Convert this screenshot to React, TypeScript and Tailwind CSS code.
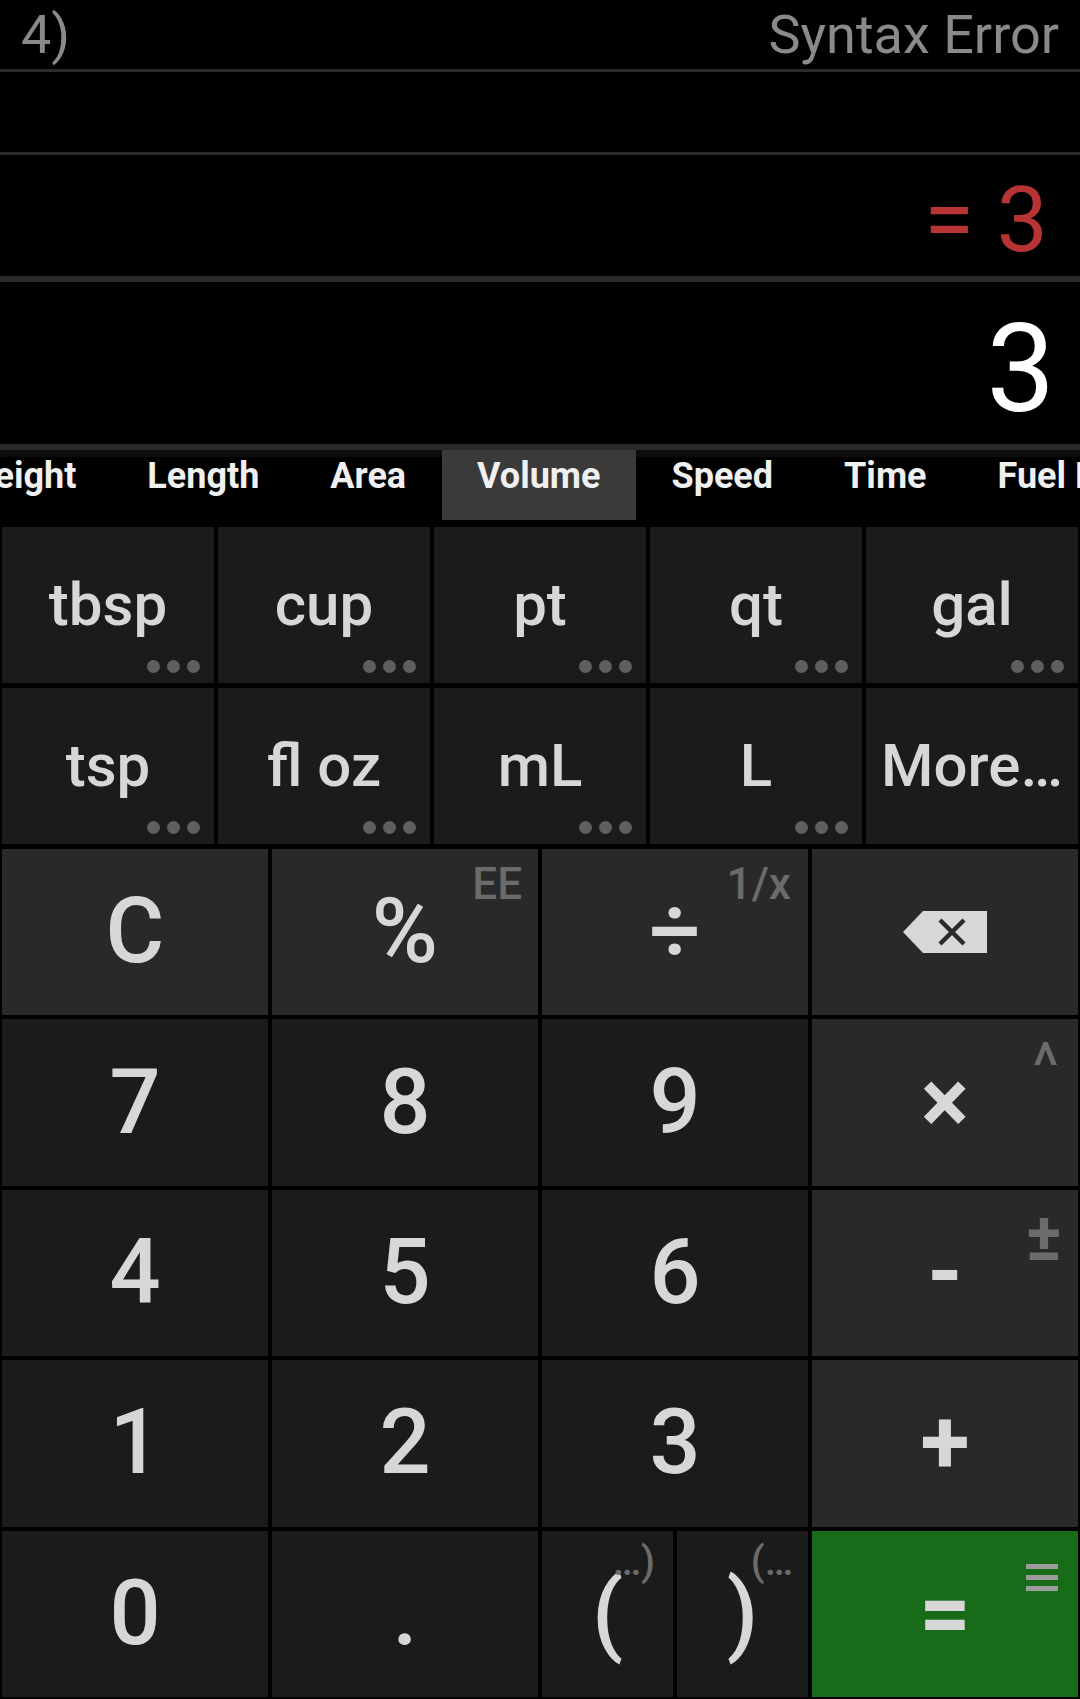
import { ReactNode } from 'react';

const tabs = ['Weight', 'Length', 'Area', 'Volume', 'Speed', 'Time', 'Fuel Economy'];

const units = [
  { label: 'tbsp', dots: true },
  { label: 'cup', dots: true },
  { label: 'pt', dots: true },
  { label: 'qt', dots: true },
  { label: 'gal', dots: true },
  { label: 'tsp', dots: true },
  { label: 'fl oz', dots: true },
  { label: 'mL', dots: true },
  { label: 'L', dots: true },
  { label: 'More…', dots: false },
];

const Dots = () => (
  <div className="absolute right-[14px] bottom-[10px] flex gap-[7px]">
    <span className="w-[13px] h-[13px] rounded-full bg-[#5f5f5f]" />
    <span className="w-[13px] h-[13px] rounded-full bg-[#5f5f5f]" />
    <span className="w-[13px] h-[13px] rounded-full bg-[#5f5f5f]" />
  </div>
);

type KeyProps = {
  children: ReactNode;
  sub?: ReactNode;
  subClass?: string;
  tone?: 'num' | 'op' | 'eq';
  className?: string;
};

const Key = ({ children, sub, subClass = '', tone = 'num', className = '' }: KeyProps) => {
  const bg = tone === 'op' ? 'bg-[#292929]' : tone === 'eq' ? 'bg-[#186b18]' : 'bg-[#1b1b1b]';
  return (
    <div className={`relative flex items-center justify-center text-[90px] leading-none text-[#d7d7d7] ${bg} ${className}`}>
      {children}
      {sub && <div className={`absolute leading-none text-[#6b6b6b] ${subClass}`}>{sub}</div>}
    </div>
  );
};

const Backspace = () => (
  <svg width="84" height="42" viewBox="0 0 84 42">
    <path d="M0 21 L20 0 H84 V42 H20 Z" fill="#d7d7d7" />
    <path d="M37 9 L61 33 M61 9 L37 33" stroke="#292929" strokeWidth="4.5" />
  </svg>
);

const Bars = () => (
  <svg width="32" height="27" viewBox="0 0 32 27">
    <rect x="0" y="0" width="32" height="5" fill="#9c9c9c" />
    <rect x="0" y="11" width="32" height="5" fill="#9c9c9c" />
    <rect x="0" y="22" width="32" height="5" fill="#9c9c9c" />
  </svg>
);

export default function App() {
  return (
    <div className="w-[1080px] h-[1699px] bg-black overflow-hidden [font-family:Roboto,'Noto_Sans',sans-serif]">
      {/* display */}
      <div className="h-[69px] flex items-center justify-between px-[21px] text-[54px] leading-none text-[#8a8a8a]">
        <span>4)</span>
        <span>Syntax Error</span>
      </div>
      <div className="h-[3px] bg-[#2a2a2a]" />
      <div className="h-[80px]" />
      <div className="h-[3px] bg-[#2a2a2a]" />
      <div className="h-[121px] flex justify-end items-start pt-[20px] pr-[32px] text-[91px] leading-none text-[#b83333]">
        <span>=</span>
        <span className="ml-[23px]">3</span>
      </div>
      <div className="h-[6px] bg-[#2a2a2a]" />
      <div className="h-[162px] flex justify-end items-start pt-[27px] pr-[25px] text-[122px] leading-none text-white">
        3
      </div>
      <div className="h-[6px] bg-[#2a2a2a]" />

      {/* tabs */}
      <div className="h-[70px] flex overflow-hidden whitespace-nowrap bg-[linear-gradient(to_bottom,#0c0c0c_7px,#000_7px)]">
        {tabs.map((t, i) => (
          <div
            key={t}
            className={`shrink-0 px-[35.5px] pt-[8px] text-[36px] font-bold leading-none text-[#f0f0f0] ${i === 0 ? '-ml-[72px]' : ''} ${t === 'Volume' ? 'bg-[#3a3a3a]' : ''}`}
          >
            {t}
          </div>
        ))}
      </div>

      {/* units */}
      <div className="mt-[7px] px-[2px] grid grid-cols-5 grid-rows-[156px_156px] gap-x-[4px] gap-y-[5px]">
        {units.map((u) => (
          <div
            key={u.label}
            className="relative flex items-center justify-center bg-[#1b1b1b] text-[60px] leading-none text-[#d7d7d7] font-medium"
          >
            {u.label}
            {u.dots && <Dots />}
          </div>
        ))}
      </div>

      {/* keypad */}
      <div className="mt-[5px] h-[848px] px-[2px] grid grid-cols-4 grid-rows-5 gap-[4px] font-medium">
        <Key tone="op">C</Key>
        <Key tone="op" sub="EE" subClass="top-[13px] right-[16px] text-[44px]">%</Key>
        <Key tone="op" sub="1/x" subClass="top-[13px] right-[17px] text-[44px]">÷</Key>
        <Key tone="op">
          <Backspace />
        </Key>

        <Key>7</Key>
        <Key>8</Key>
        <Key>9</Key>
        <Key tone="op" sub="^" subClass="top-[16px] right-[19px] text-[64px] font-normal" className="font-bold">×</Key>

        <Key>4</Key>
        <Key>5</Key>
        <Key>6</Key>
        <Key tone="op" sub="±" subClass="top-[14px] right-[16px] text-[67px]" className="font-bold">-</Key>

        <Key>1</Key>
        <Key>2</Key>
        <Key>3</Key>
        <Key tone="op" className="font-bold">+</Key>

        <Key>0</Key>
        <Key>.</Key>
        <div className="flex gap-[4px]">
          <Key sub="…)" subClass="top-[11px] right-[18px] text-[40px]" className="flex-1">(</Key>
          <Key sub="(…" subClass="top-[11px] right-[15px] text-[40px]" className="flex-1">)</Key>
        </div>
        <Key tone="eq" sub={<Bars />} subClass="top-[33px] right-[20px]" className="font-bold">=</Key>
      </div>
    </div>
  );
}
